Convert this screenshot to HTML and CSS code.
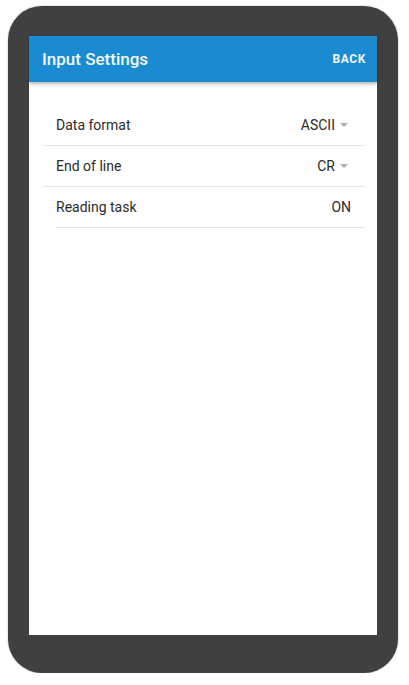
FILE: index.html
```html
<!DOCTYPE html>
<html>
<head>
    <title>Input Settings</title>
    <link rel="stylesheet" href="styles.css">
</head>
<body>
    <div class="phone">
        <div class="screen">
            <div class="toolbar">
                <div class="toolbar-title">Input Settings</div>
                <div class="toolbar-action">BACK</div>
            </div>

            <div class="settings-list">
                <div class="setting-row">
                    <span class="setting-label">Data format</span>
                    <span class="setting-value has-caret">ASCII</span>
                </div>
                <div class="setting-row">
                    <span class="setting-label">End of line</span>
                    <span class="setting-value has-caret">CR</span>
                </div>
                <div class="setting-row inset">
                    <span class="setting-label">Reading task</span>
                    <span class="setting-value">ON</span>
                </div>
            </div>
        </div>
    </div>
</body>
</html>
```

FILE: styles.css
```css
body {
    margin: 0;
    background-color: #fff;
    font-family: Roboto, "Liberation Sans", Arial, sans-serif;
}

.phone {
    width: 390px;
    height: 667px;
    margin: 6px 0 0 8px;
    padding: 30px 21px 38px 21px;
    box-sizing: border-box;
    background-color: #404040;
    border-radius: 34px;
    box-shadow: 0 0 2px rgba(0, 0, 0, 0.3);
}

.screen {
    height: 100%;
    background-color: #fff;
    display: flex;
    flex-direction: column;
}

.toolbar {
    height: 46px;
    background-color: #1a8bd0;
    display: flex;
    align-items: center;
    justify-content: space-between;
    padding: 0 11px 0 13px;
    box-shadow: 0 2px 3px rgba(0, 0, 0, 0.28);
    color: #f2f7fb;
}

.toolbar-title {
    font-size: 17px;
    font-weight: 500;
}

.toolbar-action {
    font-size: 12px;
    font-weight: 700;
    letter-spacing: 0.6px;
}

.settings-list {
    margin: 23px 12px 0 14px;
}

.setting-row {
    height: 40px;
    display: flex;
    align-items: center;
    justify-content: space-between;
    padding: 0 14px 0 13px;
    border-bottom: 1px solid #e6e6e6;
    font-size: 14px;
    color: #2b2b2b;
}

.setting-row.inset {
    margin-left: 13px;
    padding-left: 0;
}

.setting-value.has-caret {
    display: flex;
    align-items: center;
}

.setting-value.has-caret::after {
    content: "";
    margin-left: 5px;
    margin-right: 3px;
    border-left: 4px solid transparent;
    border-right: 4px solid transparent;
    border-top: 4px solid #b0b0b0;
}
```
